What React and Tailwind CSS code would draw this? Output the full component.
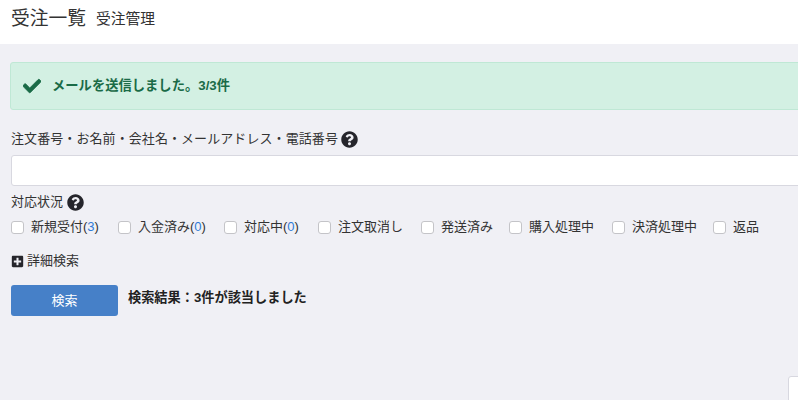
import { FaCheck, FaQuestionCircle, FaPlusSquare } from 'react-icons/fa';

const statuses = [
  { label: '新規受付', count: 3, width: 'w-[107px]' },
  { label: '入金済み', count: 0, width: 'w-[106px]' },
  { label: '対応中', count: 0, width: 'w-[94px]' },
  { label: '注文取消し', width: 'w-[103px]' },
  { label: '発送済み', width: 'w-[88px]' },
  { label: '購入処理中', width: 'w-[103px]' },
  { label: '決済処理中', width: 'w-[101px]' },
  { label: '返品', width: 'w-[60px]' },
];

function App() {
  return (
    <div className="h-[400px] w-[798px] overflow-hidden bg-[#f0f0f5] text-[#333] font-['Liberation_Sans','Noto_Sans_CJK_JP',sans-serif]">
      {/* Header */}
      <header className="h-11 bg-white flex items-center pl-[11px] pb-[7px]">
        <h1 className="text-[18.75px] leading-6">受注一覧</h1>
        <span className="ml-[10px] text-[14.75px] leading-6">受注管理</span>
      </header>

      <main className="pl-[10px]">
        {/* Alert */}
        <div className="mt-[18px] w-[800px] h-12 bg-[#d3f0e3] border border-[#bfe8d5] rounded-[3px] flex items-center pl-[12px] text-[#1a6b47]">
          <FaCheck className="w-[18px] h-[18px]" stroke="currentColor" strokeWidth={24} />
          <span className="ml-[11px] text-[13.3px] font-bold">メールを送信しました。3/3件</span>
        </div>

        {/* Keyword */}
        <div className="mt-[20px] ml-px flex items-center h-[18px] text-[13px] tracking-[0.08px]">
          注文番号・お名前・会社名・メールアドレス・電話番号
          <FaQuestionCircle className="ml-[3px] w-[17px] h-[17px] text-[#25252b]" />
        </div>
        <input
          type="text"
          className="block mt-[7px] ml-px w-[800px] h-[31px] bg-white border border-[#d8d8e0] rounded-[3px]"
        />

        {/* Status */}
        <div className="mt-[7px] ml-px flex items-center h-[18px] text-[13px]">
          対応状況
          <FaQuestionCircle className="ml-[4px] w-[17px] h-[17px] text-[#25252b]" />
        </div>
        <div className="mt-[7px] ml-px flex items-center h-[18px] text-[13px]">
          {statuses.map((s) => (
            <label key={s.label} className={`flex items-center shrink-0 ${s.width}`}>
              <span className="w-[13px] h-[13px] bg-white border border-[#c4c4c8] rounded-[3px] mr-[7px]" />
              <span>
                {s.label}
                {s.count !== undefined && (
                  <>
                    (<span className="text-[#2f7bd6]">{s.count}</span>)
                  </>
                )}
              </span>
            </label>
          ))}
        </div>

        {/* Advanced search */}
        <div className="mt-[16px] ml-px flex items-center h-[18px] text-[13px]">
          <FaPlusSquare className="w-[13px] h-[13px] text-[#25252b] mr-[3px]" />
          詳細検索
        </div>

        {/* Search button */}
        <div className="mt-[15px] ml-px flex items-center">
          <button className="w-[107px] h-[31px] bg-[#4680c8] text-white text-[13px] rounded-[3px]">
            検索
          </button>
          <span className="ml-[10px] text-[13.2px] font-bold text-[#222] mb-[5px]">検索結果：3件が該当しました</span>
        </div>

        {/* Card edge at the bottom right */}
        <div className="mt-[60px] ml-[778px] w-[20px] h-[40px] bg-white border border-[#d8d8e0] rounded-tl-[3px]" />
      </main>
    </div>
  );
}

export default App;
